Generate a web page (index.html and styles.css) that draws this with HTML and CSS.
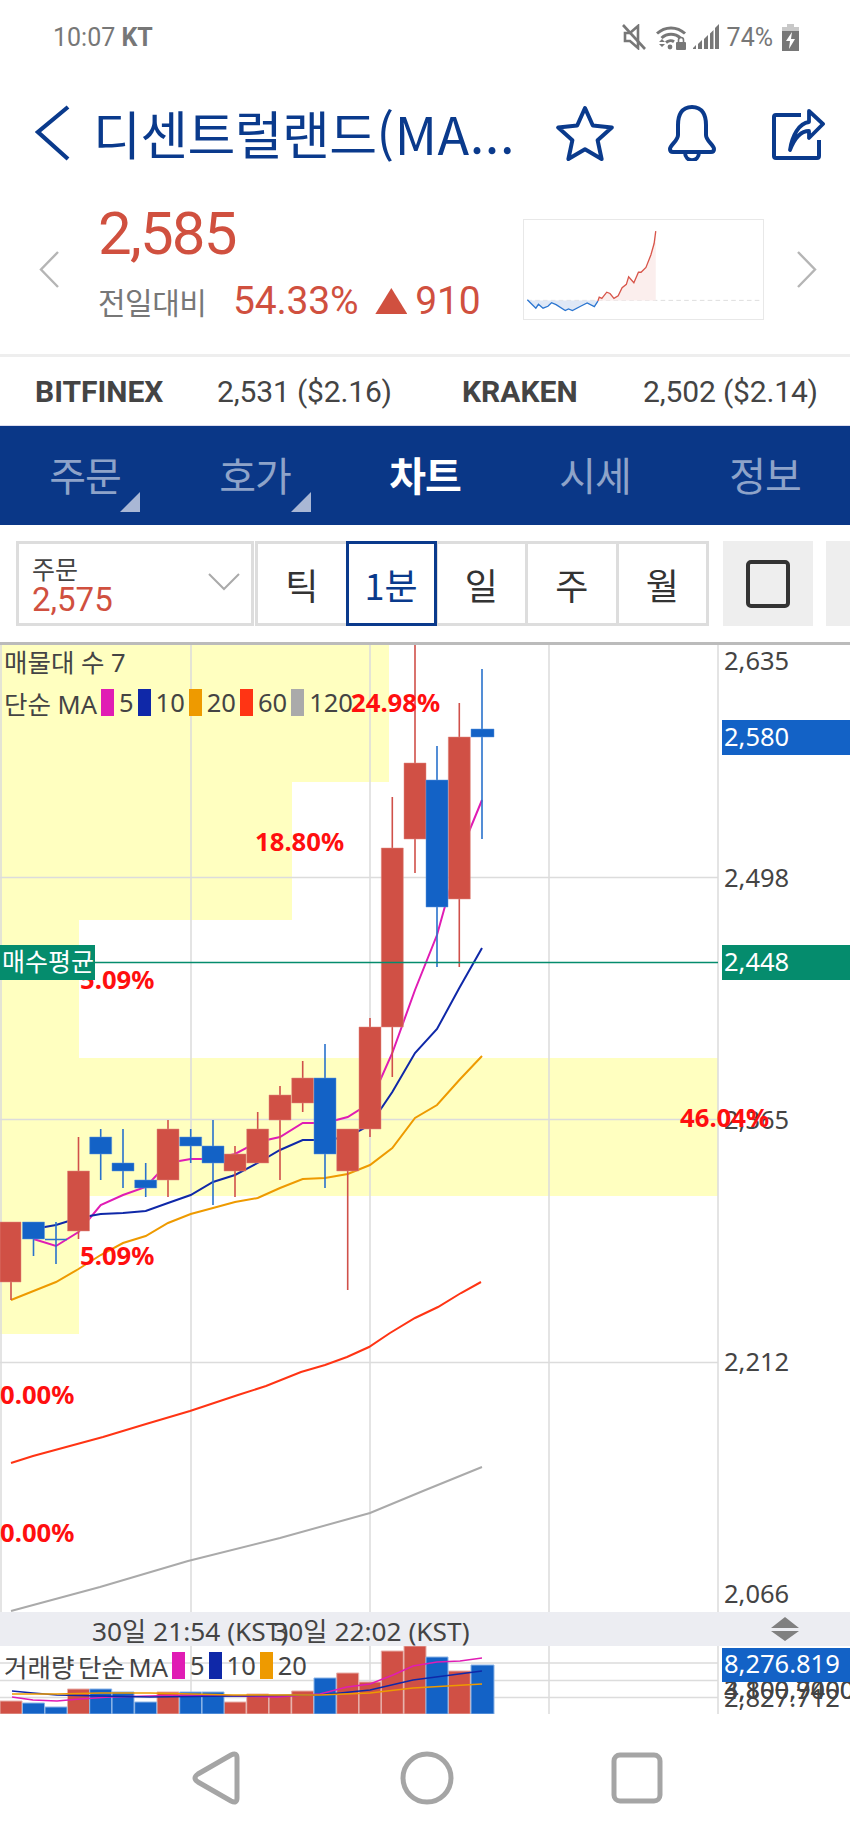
FILE: index.html
```html
<!DOCTYPE html>
<html lang="ko">
<head>
<meta charset="utf-8">
<title>디센트럴랜드 차트</title>
<link rel="stylesheet" href="styles.css">
</head>
<body>
<div class="screen">
  <div class="status">
    <span class="clock">10:07 <b>KT</b></span>
    <div class="status-right">
      <svg class="ico-mute" width="24" height="26" viewBox="0 0 24 26"><path d="M3 9h5l8-7v22l-8-7H3z" fill="none" stroke="#777" stroke-width="2.6"/><path d="M1 1l22 24" stroke="#777" stroke-width="2.6"/></svg>
      <svg class="ico-wifi" width="31" height="26" viewBox="0 0 31 26"><g fill="none" stroke="#777" stroke-width="3"><path d="M1 9.500C9 2 21 2 29 9.500"/><path d="M5.500 14C11 9 19 9 24.500 14"/><path d="M10 18.500c2.500-2.200 6-2.200 8 -.8"/></g><circle cx="14" cy="23" r="2.400" fill="#777"/><path d="M3 18l3-3 3 3zM3 20l3 3 3-3z" fill="#777"/><rect x="20" y="18" width="10" height="8" rx="1" fill="#777"/><path d="M22.500 18v-2a2.500 2.500 0 015 0v2" fill="none" stroke="#777" stroke-width="1.600"/></svg>
      <svg class="ico-signal" width="26" height="26" viewBox="0 0 26 26"><path d="M0 25h3v-4l-3 3zM5 25h4V16l-4 4zM11 25h4V11l-4 4zM17 25h3.500V6L17 9.500zM22 25h4V0l-4 4z" fill="#777"/></svg>
      <span class="battery-pct">74%</span>
      <svg class="ico-battery" width="17" height="27" viewBox="0 0 17 27"><path d="M5 0h7v3h5v24H0V3h5z" fill="#c8c8c8"/><path d="M0 7h17v20H0z" fill="#777"/><path d="M10 8L4 17h4l-1 8 6-10H9z" fill="#fff"/></svg>
    </div>
  </div>

  <div class="titlebar">
    <svg class="ico-back" width="36" height="56" viewBox="0 0 36 56"><path d="M33 2L3 27l30 27" fill="none" stroke="#0a3a8c" stroke-width="4.200"/></svg>
    <h1 class="title">디센트럴랜드<span class="title-latin">(MA...</span></h1>
    <svg class="ico-star" width="58" height="56" viewBox="0 0 58 56"><path d="M29 3l7.800 17.500 19 2-14.200 12.700 4 18.800L29 44.300 12.400 54l4-18.800L2.200 22.500l19-2z" fill="none" stroke="#0a3a8c" stroke-width="4" stroke-linejoin="round"/></svg>
    <svg class="ico-bell" width="52" height="56" viewBox="0 0 52 56"><path d="M26 2c-11 0-14 9-14 18v10c0 6-8 10-8 14 0 2 1 3 3 3h38c2 0 3-1 3-3 0-4-8-8-8-14V20c0-9-3-18-14-18z" fill="none" stroke="#0a3a8c" stroke-width="4"/><path d="M19 47c0 11 14 11 14 0" fill="none" stroke="#0a3a8c" stroke-width="4"/></svg>
    <svg class="ico-share" width="54" height="54" viewBox="0 0 54 54"><path d="M30 9H5a2 2 0 00-2 2v39a2 2 0 002 2h41a2 2 0 002-2V34" fill="none" stroke="#0a3a8c" stroke-width="4"/><path d="M19 44c2-14 9-27 19-28V5l14 13-14 14v-7c-8 0-14 6-19 19z" fill="none" stroke="#0a3a8c" stroke-width="3.800" stroke-linejoin="round"/></svg>
  </div>

  <div class="quote">
    <svg class="pager" width="21" height="37" viewBox="0 0 21 37"><path d="M19 1L2 18.500 19 36" fill="none" stroke="#b5b5b5" stroke-width="2.400"/></svg>
    <div class="quote-main">
      <div class="price">2,585</div>
      <div class="change">
        <span class="change-label">전일대비</span>
        <span class="change-pct">54.33%</span>
        <span class="change-tri"></span>
        <span class="change-abs">910</span>
      </div>
    </div>
    <div class="spark">
      <svg width="239" height="99" viewBox="66 58 723 303">
        <path d="M72 304H785" stroke="#ddd" stroke-width="3" stroke-dasharray="14 10" fill="none"/>
        <path d="M72 304L85 315 98 328 106 316 120 328 135 322 146 311 160 317 188 335 198 330 210 335 235 322 255 312 277 323 288 306V304z" fill="#dfe8f6"/>
        <path d="M288 304L292 294 300 298 315 279 325 283 337 298 350 290 362 265 375 255 382 232 398 250 412 218 420 218 435 203 450 165 460 130 465 92V304z" fill="#fbeeed"/>
        <path d="M72 302L85 315 98 328 106 316 120 328 135 322 146 311 160 317 188 335 198 330 210 335 235 322 255 312 277 323 288 306" fill="none" stroke="#2a75d0" stroke-width="4"/>
        <path d="M288 306L292 294 300 298 315 279 325 283 337 298 350 290 362 265 375 255 382 232 398 250 412 218 420 218 435 203 450 165 460 130 465 92" fill="none" stroke="#d8554a" stroke-width="4"/>
      </svg>
    </div>
    <svg class="pager" width="21" height="37" viewBox="0 0 21 37"><path d="M2 1l17 17.500L2 36" fill="none" stroke="#b5b5b5" stroke-width="2.400"/></svg>
  </div>

  <div class="exchanges">
    <b class="ex-name">BITFINEX</b>
    <span class="ex-val">2,531 ($2.16)</span>
    <b class="ex-name">KRAKEN</b>
    <span class="ex-val">2,502 ($2.14)</span>
  </div>

  <nav class="tabs">
    <a class="tab tab-more">주문</a>
    <a class="tab tab-more">호가</a>
    <a class="tab tab-active">차트</a>
    <a class="tab">시세</a>
    <a class="tab">정보</a>
  </nav>

  <div class="toolbar">
    <div class="order-select">
      <div class="order-text">
        <div class="order-label">주문</div>
        <div class="order-price">2,575</div>
      </div>
      <svg class="order-chevron" width="32" height="18" viewBox="0 0 32 18"><path d="M1 1l15 15L31 1" fill="none" stroke="#aaa" stroke-width="2"/></svg>
    </div>
    <div class="segments">
      <div class="seg">틱</div>
      <div class="seg seg-on">1분</div>
      <div class="seg">일</div>
      <div class="seg">주</div>
      <div class="seg">월</div>
    </div>
    <div class="tool-btn"><span class="tool-square"></span></div>
    <div class="tool-btn tool-cut"></div>
  </div>

  <div class="chart">
    <div class="price-pane">
      <svg class="pane-svg" width="850" height="970" viewBox="0 642 850 970">
        <g class="zones">
          <rect x="0" y="644" width="389" height="138"/>
          <rect x="0" y="782" width="292" height="138"/>
          <rect x="0" y="920" width="79" height="138"/>
          <rect x="0" y="1058" width="718" height="138"/>
          <rect x="0" y="1196" width="79" height="138"/>
        </g>
        <path class="grid" d="M1 644V1612M191 644V1612M370 644V1612M549 644V1612M718 644V1612M0 877.500H718M0 1119.500H718M0 1362.500H718"/>
        <path class="ma ma5" d="M33.500 1239L56 1246 78.500 1232 100.700 1205 123 1195 145.700 1187 168 1163 190.700 1159 213 1159 235 1154 257.700 1142 280 1137 302.700 1123 325 1123 347.700 1117 370 1103 392.300 1053 415 990 437 935 459.300 855 482 800"/>
        <path class="ma ma10" d="M33.500 1229L56 1225 78.500 1218 100.700 1214 123 1213 145.700 1211 168 1203 190.700 1195 213 1182 235 1175 257.700 1163 280 1150 302.700 1140 325 1140 347.700 1137 370 1125 392.300 1092 415 1053 437 1029 459.300 988 482 948"/>
        <path class="ma ma20" d="M11 1300L33.500 1291 56 1282 78.500 1269 100.700 1255 123 1243 145.700 1236 168 1223 190.700 1214 213 1208 235 1202 257.700 1198 280 1188 302.700 1179 325 1178 347.700 1174 370 1165 392.300 1148 415 1118 437 1105 459.300 1080 482 1056"/>
        <path class="ma ma60" d="M11 1463L33 1456 103 1437 146 1424 190 1411 238 1395 266 1386 301 1372 325 1365 347 1357 369 1347 390 1333 415 1318 438 1307 461 1293 481 1282"/>
        <path class="ma ma120" d="M11 1611L100 1587 188 1561 280 1538 370 1513 423 1491 482 1467"/>
        <path class="wick-up" d="M11 1222V1300M78.500 1137V1239M168 1120V1197M235 1146V1197M257.700 1112V1163M280 1086V1180M302.700 1061V1112M347.700 1129V1290M370 1018V1137M392.300 797V1077M415 644V873M459.300 703V967"/>
        <path class="wick-down" d="M33.500 1222V1256M56 1222V1264M45 1239.500H67M100.700 1129V1180M123 1129V1188M145.700 1163V1197M190.700 1129V1163M213 1120V1205M325 1044V1188M437 746V967M482 669V839"/>
        <path class="body-up" d="M0 1222h21v60H0zM67.500 1171h22v60h-22zM157 1129h22v51h-22zM224 1154h22v17h-22zM246.700 1129h22v34h-22zM269 1095h22v25h-22zM291.700 1078h22v25h-22zM336.700 1129h22v42h-22zM359 1027h22v102h-22zM381.300 848h22v179h-22zM404 763h22v76h-22zM448.300 737h22v162h-22z"/>
        <path class="body-down" d="M22.500 1222h22v17h-22zM89.700 1137h22v17h-22zM112 1163h22v8h-22zM134.700 1180h22v8h-22zM179.700 1137h22v9h-22zM202 1146h22v17h-22zM314 1078h22v76h-22zM426 780h22v127h-22zM471 729h23v8h-23z"/>
        <path class="avg-line" d="M95 962.500H718"/>
        <text class="pct" x="351" y="712">24.98%</text>
        <text class="pct" x="255" y="851">18.80%</text>
        <text class="pct" x="80" y="989">5.09%</text>
        <text class="pct" x="80" y="1265">5.09%</text>
        <text class="pct" x="0" y="1404">0.00%</text>
        <text class="pct" x="0" y="1542">0.00%</text>
        <text class="axis" x="724" y="670">2,635</text>
        <text class="axis" x="724" y="887">2,498</text>
        <text class="axis" x="724" y="1129">2,365</text>
        <text class="axis" x="724" y="1371">2,212</text>
        <text class="axis" x="724" y="1603">2,066</text>
        <text class="pct" x="680" y="1127">46.04%</text>
        <rect class="badge-blue" x="722" y="720" width="128" height="35"/>
        <text class="axis axis-on" x="724" y="746">2,580</text>
        <rect class="badge-green" x="722" y="945" width="128" height="35"/>
        <text class="axis axis-on" x="724" y="971">2,448</text>
        <rect class="badge-green" x="0" y="945" width="95" height="35"/>
        <text class="axis axis-on axis-kr" x="2" y="971">매수평균</text>
      </svg>
      <div class="legend">
        <div class="legend-row">매물대 수 7</div>
        <div class="legend-row">단순 MA<i class="sw sw5"></i>5<i class="sw sw10"></i>10<i class="sw sw20"></i>20<i class="sw sw60"></i>60<i class="sw sw120"></i>120</div>
      </div>
    </div>

    <div class="timebar">
      <span class="time-a">30일 21:54 (KST)</span>
      <span class="time-b">30일 22:02 (KST)</span>
      <svg class="resize" width="30" height="26" viewBox="0 0 30 26"><path d="M15 1l14 11H1zM1 15h28L15 25z" fill="#808080"/></svg>
    </div>

    <div class="volume-pane">
      <svg class="pane-svg" width="850" height="68" viewBox="0 1646 850 68">
        <path class="grid" d="M0 1663H718M0 1680.500H718M0 1697.500H718M191 1646V1714M370 1646V1714M549 1646V1714M718 1646V1714"/>
        <path class="bar-up" d="M0 1701h22v13H0zM67.500 1689h22v25h-22zM157 1692h22v22h-22zM224 1702h22v12h-22zM246.700 1694h22v20h-22zM269 1695h22v19h-22zM291.700 1691h22v23h-22zM336.700 1673h22v41h-22zM359 1682h22v32h-22zM381.300 1651h22v63h-22zM404 1646h22v68h-22zM448.300 1671h22v43h-22z"/>
        <path class="bar-down" d="M22.500 1703h22v11h-22zM45 1707h22v7H45zM89.700 1689h22v25h-22zM112 1692h22v22h-22zM134.700 1702h22v12h-22zM179.700 1692h22v22h-22zM202 1692h22v22h-22zM314 1678h22v36h-22zM426 1657h22v57h-22zM471 1665h23v49h-23z"/>
        <path class="vma vma5" d="M12 1697L33 1700 57 1701 80 1699 110 1697 150 1696 187 1695 233 1696 277 1697 320 1694 347 1687 370 1684 393 1675 413 1666 437 1662 460 1661 482 1658"/>
        <path class="vma vma10" d="M12 1691L33 1693 57 1695 100 1696 150 1697 233 1696 320 1695 370 1690 413 1680 482 1671"/>
        <path class="vma vma20" d="M12 1694L57 1694 100 1693 150 1693 233 1695 320 1695 370 1693 413 1688 482 1684"/>
        <text class="axis" x="724" y="1699">4,100,7000</text>
        <text class="axis" x="724" y="1699">3,800.9400</text>
        <text class="axis" x="724" y="1707">2,827.712</text>
        <rect class="badge-blue" x="722" y="1648" width="128" height="34"/>
        <text class="axis axis-on" x="724" y="1673">8,276.819</text>
      </svg>
      <div class="legend legend-vol">
        <div class="legend-row">거래량 단순 MA<i class="sw sw5"></i>5<i class="sw sw10"></i>10<i class="sw sw20"></i>20</div>
      </div>
    </div>
  </div>

  <div class="softkeys">
    <svg width="52" height="56" viewBox="0 0 52 56"><path d="M46 8V48Q46 54 40 51L7 32Q1 28 7 24L40 5Q46 2 46 8Z" fill="none" stroke="#a5a5a5" stroke-width="5"/></svg>
    <svg width="56" height="56" viewBox="0 0 56 56"><circle cx="28" cy="28" r="24" fill="none" stroke="#a5a5a5" stroke-width="5"/></svg>
    <svg width="52" height="52" viewBox="0 0 52 52"><rect x="3" y="3" width="46" height="46" rx="6" fill="none" stroke="#a5a5a5" stroke-width="5"/></svg>
  </div>
</div>
</body>
</html>
```
FILE: styles.css
```css
* { box-sizing: border-box; }
html, body { margin: 0; padding: 0; background: #fff; }
.screen {
  width: 850px; height: 1842px; overflow: hidden; display: flex; flex-direction: column;
  font-family: "Noto Sans CJK KR", "Noto Sans", sans-serif; color: #444;
}
.status { height: 74px; flex: none; display: flex; align-items: center; justify-content: space-between; padding: 0 51px 0 53px; color: #777; font: 25px Roboto, sans-serif; }
.clock b { font-weight: 700; }
.status-right { display: flex; align-items: center; }
.ico-wifi { margin-left: 10px; }
.ico-signal { margin-left: 6px; }
.battery-pct { margin-left: 8px; }
.ico-battery { margin-left: 9px; }

.titlebar { height: 110px; flex: none; display: flex; align-items: center; padding: 8px 0 0 35px; }
.title { margin: 0 0 0 22px; width: 463px; flex: none; white-space: nowrap; font-size: 52px; font-weight: 400; letter-spacing: -.6px; color: #0a3a8c; line-height: 1; }
.title-latin { letter-spacing: .6px; }
.ico-bell { margin-left: 52px; }
.ico-share { margin-left: 53px; }

.quote { height: 173px; flex: none; display: flex; align-items: center; padding: 0 33px 0 39px; border-bottom: 3px solid #eee; }
.quote-main { width: 425px; margin-left: 38px; align-self: flex-start; padding-top: 18px; display: flex; flex-direction: column; }
.price { font: 60px/64px Roboto, sans-serif; letter-spacing: -1.800px; color: #d0503f; }
.change { display: flex; align-items: center; margin-top: 11px; height: 48px; }
.change-label { font-size: 30px; letter-spacing: -.5px; color: #777; width: 135px; }
.change-pct, .change-abs { font: 39px Roboto, sans-serif; letter-spacing: -.2px; color: #d0503f; }
.change-tri { width: 32px; height: 26px; margin: 0 8px 0 17px; background: #d0503f; clip-path: polygon(50% 0, 100% 100%, 0 100%); }
.spark { width: 241px; height: 101px; border: 1px solid #e8e8e8; flex: none; }
.spark svg { display: block; }
.quote .pager:last-child { margin-left: auto; }

.exchanges { height: 69px; flex: none; display: flex; align-items: center; padding: 0 0 0 35px; font: 30px Roboto, sans-serif; letter-spacing: -.15px; color: #444; border-bottom: 1px solid #dde; white-space: nowrap; }
.ex-name { font-weight: 700; letter-spacing: 0; }
.ex-name:first-child { width: 182px; }
.ex-val:nth-child(2) { width: 245px; }
.ex-name:nth-child(3) { width: 181px; }

.tabs { height: 99px; flex: none; display: flex; background: #0a3787; }
.tab { position: relative; flex: 1; display: flex; align-items: center; justify-content: center; font-size: 40px; color: #8ea3c9; letter-spacing: -1px; padding-bottom: 4px; }
.tab-active { color: #fff; font-weight: 700; }
.tab-more::after { content: ""; position: absolute; left: 120px; top: 66px; width: 20px; height: 20px; background: #a9b7d5; clip-path: polygon(100% 0, 100% 100%, 0 100%); }
.tab-more + .tab-more::after { left: 121px; }

.toolbar { height: 117px; flex: none; display: flex; padding: 16px 0 16px 16px; }
.order-select { width: 239px; height: 85px; border: 3px solid #ddd; display: flex; align-items: center; justify-content: space-between; padding: 3px 11px 0 13px; }
.order-label { font-size: 25px; line-height: 30px; color: #444; letter-spacing: 0; }
.order-price { font: 33px/34px Roboto, sans-serif; color: #d0503f; }
.order-chevron { margin-top: -6px; }
.segments { width: 454px; height: 85px; display: flex; border: 3px solid #ddd; margin-left: 1px; flex: none; }
.seg { flex: 1; display: flex; align-items: center; justify-content: center; font-size: 36px; color: #333; border-left: 3px solid #ddd; }
.seg:first-child { border-left: 0; }
.seg-on { flex: 0 0 85px; margin: 0 1px 0 3px; color: #0a3a8c; outline: 3px solid #0a3a8c; border-left: 0; position: relative; }
.tool-btn { width: 90px; height: 85px; margin-left: 14px; background: #eee; display: flex; align-items: center; justify-content: center; flex: none; }
.tool-square { width: 44px; height: 48px; border: 4px solid #333; border-radius: 5px; }
.tool-cut { width: 24px; margin-left: 13px; }

.chart { flex: none; border-top: 3px solid #bbb; display: flex; flex-direction: column; }
.price-pane { position: relative; height: 967px; overflow: hidden; }
.pane-svg { display: block; position: absolute; left: 0; bottom: 0; }
.zones rect { fill: #ffffc0; }
.grid { fill: none; stroke: #dcdcdc; stroke-width: 1.500; }
.ma { fill: none; stroke-width: 2; }
.ma5 { stroke: #e01cb4; }
.ma10 { stroke: #0f28a8; }
.ma20 { stroke: #ee9a00; }
.ma60 { stroke: #ff3414; }
.ma120 { stroke: #aaa; }
.wick-up { stroke: #d0504a; stroke-width: 1.600; fill: none; }
.wick-down { stroke: #2a72cc; stroke-width: 1.600; fill: none; }
.body-up { fill: #d05045; stroke: #e08a80; stroke-width: .5; }
.body-down { fill: #1362c6; stroke: #5f96dc; stroke-width: .5; }
.avg-line { stroke: #058c6d; stroke-width: 1.600; fill: none; }
.pct { font: 700 25.700px "Noto Sans", sans-serif; fill: #ff0f0f; }
.axis { font: 25.500px "Noto Sans", "Noto Sans CJK KR", sans-serif; fill: #444; }
.axis-kr { font-size: 25px; }
.axis-on { fill: #fff; }
.badge-blue { fill: #1362c6; }
.badge-green { fill: #058c6d; }

.legend { position: absolute; left: 4px; top: -6px; font: 25.500px "Noto Sans", "Noto Sans CJK KR", sans-serif; color: #444; }
.legend-row { height: 42px; display: flex; align-items: center; white-space: pre; }
.sw { width: 13px; height: 27px; margin: 0 5px 0 4px; }
.sw5 { background: #e01cb4; }
.sw10 { background: #0f28a8; }
.sw20 { background: #ee9a00; }
.sw60 { background: #ff3414; }
.sw120 { background: #aaa; }

.timebar { height: 34px; flex: none; background: #ecedf2; display: flex; align-items: center; padding-left: 92px; font: 26.300px "Noto Sans", "Noto Sans CJK KR", sans-serif; color: #444; white-space: nowrap; position: relative; }
.time-b { margin-left: -15px; }
.resize { position: absolute; left: 770px; top: 4px; }

.volume-pane { position: relative; height: 68px; overflow: hidden; }
.legend-vol { top: -2px; word-spacing: -3px; }
.bar-up { fill: #d05045; stroke: #e7b0aa; stroke-width: 1; }
.bar-down { fill: #1362c6; stroke: #8cb4e6; stroke-width: 1; }
.vma { fill: none; stroke-width: 1.400; }
.vma5 { stroke: #e01cb4; }
.vma10 { stroke: #0f28a8; }
.vma20 { stroke: #ee9a00; }

.softkeys { flex: 1; display: grid; grid-template-columns: repeat(3, 210px); justify-content: center; justify-items: center; align-items: center; padding-left: 3px; }
```
